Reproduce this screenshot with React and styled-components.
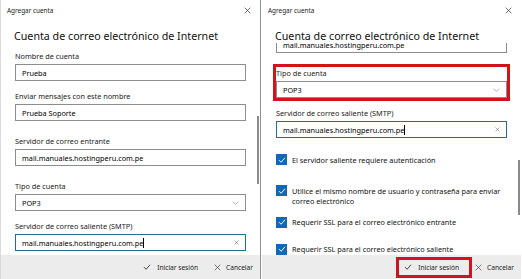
import { useEffect, useRef } from 'react';
import styled, { createGlobalStyle } from 'styled-components';

const GlobalStyle = createGlobalStyle`
  html, body {
    margin: 0;
    padding: 0;
    background: #ffffff;
  }
  body {
    font-family: "Noto Sans", "Open Sans", sans-serif;
    color: #000;
  }
`;

const Screen = styled.div`
  display: flex;
  width: 522px;
  height: 279px;
  overflow: hidden;
`;

const Window = styled.div`
  position: relative;
  width: 261px;
  height: 279px;
  display: flex;
  flex-direction: column;
  background: #ffffff;
  box-sizing: border-box;
  border-left: 1px solid ${({ $edge }) => ($edge ? '#dadada' : 'transparent')};
  border-right: 1px solid ${({ $divider }) => ($divider ? '#8f8f8f' : 'transparent')};
`;

const TitleBar = styled.div`
  height: 20px;
  flex: 0 0 20px;
  display: flex;
  align-items: center;
  justify-content: space-between;
  padding: 0 9px 0 6px;
  font-size: 6.4px;
  color: #222;
`;

const Heading = styled.h1`
  margin: 0;
  padding: 9px 0 0 13px;
  height: 23px;
  box-sizing: border-box;
  font-size: 10.7px;
  line-height: 14px;
  font-weight: 400;
  color: #111;
  white-space: nowrap;
`;

const Body = styled.div`
  flex: 1;
  overflow: hidden;
  padding: 0 14px;
`;

const Field = styled.div`
  margin-top: ${({ $top }) => $top}px;
  outline: ${({ $marked }) => ($marked ? '3px solid #d2131d' : 'none')};
`;

const Label = styled.div`
  font-size: 7.3px;
  line-height: 12px;
  margin-bottom: 2px;
  color: #1a1a1a;
  white-space: nowrap;
`;

const Input = styled.div`
  height: 17px;
  box-sizing: border-box;
  display: flex;
  align-items: center;
  padding: 0 6px;
  border: 1px solid ${({ $active }) => ($active ? '#21708f' : '#8d8d8d')};
  font-size: 7.3px;
  color: #000;
  white-space: nowrap;
`;

const Value = styled.span`
  flex: 1;
  display: flex;
  align-items: center;
`;

const Caret = styled.span`
  display: inline-block;
  width: 1px;
  height: 10px;
  background: #000;
`;

const Check = styled.div`
  display: flex;
  align-items: flex-start;
  gap: 5px;
  margin-top: ${({ $top }) => $top}px;
  font-size: 7.3px;
  line-height: 10.5px;
  color: #111;
`;

const Box = styled.span`
  flex: 0 0 11px;
  width: 11px;
  height: 11px;
  background: #1167b8;
  display: flex;
  align-items: center;
  justify-content: center;
`;

const CheckText = styled.span`
  padding-top: 0.5px;
  width: 210px;
`;

const Footer = styled.div`
  height: 24px;
  flex: 0 0 24px;
  background: #ececec;
  display: flex;
  align-items: center;
  justify-content: flex-end;
`;

const FooterButton = styled.div`
  height: 15px;
  display: flex;
  align-items: center;
  gap: ${({ $gap }) => $gap}px;
  padding: ${({ $pad }) => $pad};
  font-size: 6.6px;
  color: #222;
  outline: ${({ $marked }) => ($marked ? '3px solid #d2131d' : 'none')};
`;

const Thumb = styled.div`
  position: absolute;
  right: 1px;
  width: 2px;
  background: #8a8a8a;
  top: ${({ $top }) => $top}px;
  height: ${({ $h }) => $h}px;
`;

const CloseIcon = ({ size = 7, color = '#333' }) => (
  <svg width={size} height={size} viewBox="0 0 10 10">
    <path d="M1 1L9 9M9 1L1 9" stroke={color} strokeWidth="1" fill="none" />
  </svg>
);

const Chevron = () => (
  <svg width="7" height="4" viewBox="0 0 10 6">
    <path d="M1 1L5 5L9 1" stroke="#8a8a8a" strokeWidth="1" fill="none" />
  </svg>
);

const Tick = ({ color = '#fff', w = 8, h = 6 }) => (
  <svg width={w} height={h} viewBox="0 0 10 8">
    <path d="M1 4.2L3.8 7L9 1" stroke={color} strokeWidth="1.3" fill="none" />
  </svg>
);

const fields = [
  { label: 'Nombre de cuenta', value: 'Prueba', top: 7 },
  { label: 'Enviar mensajes con este nombre', value: 'Prueba Soporte', top: 9 },
  { label: 'Servidor de correo entrante', value: 'mail.manuales.hostingperu.com.pe', top: 14 },
  { label: 'Tipo de cuenta', value: 'POP3', top: 14, select: true },
  { label: 'Servidor de correo saliente (SMTP)', value: 'mail.manuales.hostingperu.com.pe', top: 9, active: true },
];

const checks = [
  { text: 'El servidor saliente requiere autenticación', top: 16 },
  { text: 'Utilice el mismo nombre de usuario y contraseña para enviar correo electrónico', top: 20 },
  { text: 'Requerir SSL para el correo electrónico entrante', top: 10 },
  { text: 'Requerir SSL para el correo electrónico saliente', top: 16 },
];

const Form = ({ markSelect, withChecks }) => (
  <>
    {fields.map((f) => (
      <Field key={f.label} $top={f.top} $marked={markSelect && f.select}>
        <Label>{f.label}</Label>
        <Input $active={f.active}>
          <Value>
            {f.value}
            {f.active && <Caret />}
          </Value>
          {f.select && <Chevron />}
          {f.active && <CloseIcon size={5} color="#555" />}
        </Input>
      </Field>
    ))}
    {withChecks &&
      checks.map((c) => (
        <Check key={c.text} $top={c.top}>
          <Box>
            <Tick />
          </Box>
          <CheckText>{c.text}</CheckText>
        </Check>
      ))}
  </>
);

const AccountWindow = ({ scroll = 0, marked, edge, divider, thumb }) => {
  const bodyRef = useRef(null);

  useEffect(() => {
    if (bodyRef.current) bodyRef.current.scrollTop = scroll;
  }, [scroll]);

  return (
    <Window $edge={edge} $divider={divider}>
      <TitleBar>
        <span>Agregar cuenta</span>
        <CloseIcon />
      </TitleBar>
      <Heading>Cuenta de correo electrónico de Internet</Heading>
      <Body ref={bodyRef}>
        <Form markSelect={marked} withChecks={scroll > 0} />
      </Body>
      <Footer>
        <FooterButton $gap={6} $pad="0 10px 0 5px" $marked={marked}>
          <Tick color="#444" w={8} h={6} />
          Iniciar sesión
        </FooterButton>
        <FooterButton $gap={5} $pad="0 7px 0 6px">
          <CloseIcon size={7} color="#444" />
          Cancelar
        </FooterButton>
      </Footer>
      <Thumb $top={thumb.top} $h={thumb.h} />
    </Window>
  );
};

const App = () => (
  <>
    <GlobalStyle />
    <Screen>
      <AccountWindow edge divider thumb={{ top: 116, h: 68 }} />
      <AccountWindow scroll={114} marked thumb={{ top: 160, h: 55 }} />
    </Screen>
  </>
);

export default App;
